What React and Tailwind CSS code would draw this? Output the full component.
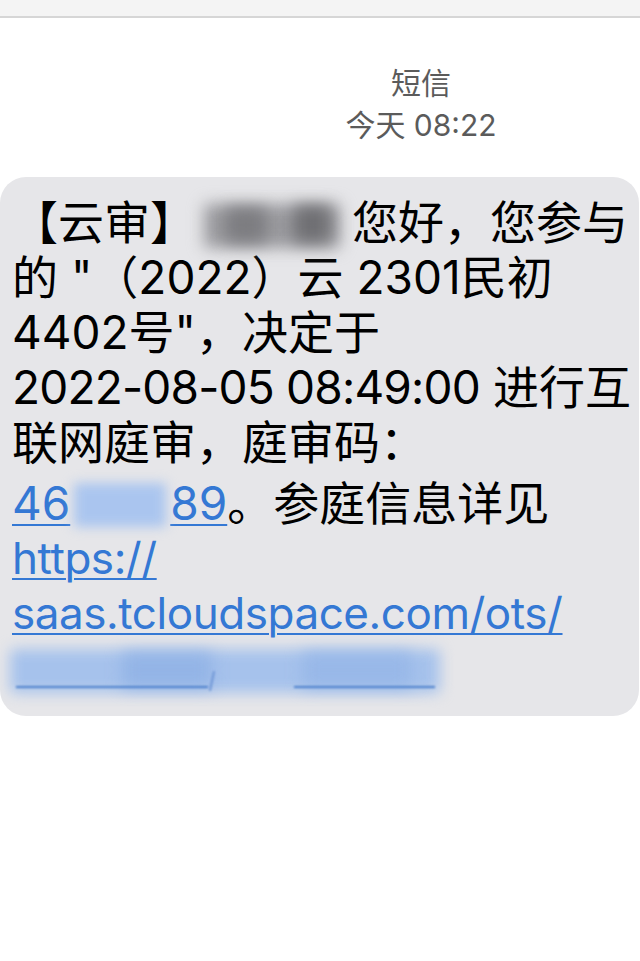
export default function App() {
  const font = { fontFamily: "Inter, 'Noto Sans CJK SC', sans-serif" };
  return (
    <div className="w-[640px] h-[961px] bg-white overflow-hidden" style={font}>
      {/* status strip */}
      <div className="h-[18px] bg-[#f4f4f4] border-b-2 border-[#d6d6d6]" />

      {/* header */}
      <div className="pl-[202px] pt-[44px] text-center text-[#5b5b5b] text-[30px] leading-[42px]">
        <div>短信</div>
        <div>今天 08:22</div>
      </div>

      {/* bubble */}
      <div className="mt-[31px] w-[639px] rounded-[26px] bg-[#e6e6e9] pl-[12px] pt-[18px] pb-[20px] text-black text-[46px] leading-[55px]">
        <div className="h-[55px] whitespace-nowrap flex items-center">
          <span>【云审】</span>
          <span className="inline-block w-[156px] h-[50px] relative">
            <span className="absolute left-[8px] top-[6px] w-[136px] h-[44px] bg-[#9a9a9e] blur-[8px] rounded" />
            <span className="absolute left-[30px] top-[10px] w-[40px] h-[34px] bg-[#7c7c80] blur-[8px] rounded" />
            <span className="absolute left-[98px] top-[8px] w-[36px] h-[36px] bg-[#6f6f73] blur-[8px] rounded" />
          </span>
          <span>您好，您参与</span>
        </div>
        <div className="h-[55px] whitespace-nowrap">的 "（2022）云 2301民初</div>
        <div className="h-[55px] whitespace-nowrap">4402号"，决定于</div>
        <div className="h-[55px] whitespace-nowrap">
          <span className="tracking-[-0.8px]">2022-08-05 08:49:00</span> 进行互
        </div>
        <div className="h-[55px] whitespace-nowrap">联网庭审，庭审码：</div>
        <div className="h-[61px] pt-[6px] whitespace-nowrap flex items-center">
          <span className="text-[#3478d4] underline decoration-2 underline-offset-4 flex items-center">
            <span>46</span>
            <span className="inline-block w-[100px] h-[50px] relative">
              <span className="absolute left-[4px] top-[4px] w-[92px] h-[44px] bg-[#aac5ef] blur-[6px]" />
            </span>
            <span>89</span>
          </span>
          <span>。参庭信息详见</span>
        </div>
        <div className="h-[55px] whitespace-nowrap text-[#3478d4] text-[44px] tracking-[-0.45px] underline decoration-2 underline-offset-4">https://</div>
        <div className="h-[55px] whitespace-nowrap text-[#3478d4] text-[44px] tracking-[-0.45px] underline decoration-2 underline-offset-4">saas.tcloudspace.com/ots/</div>
        <div className="h-[55px] relative">
          <div className="absolute left-[-2px] top-[8px] w-[430px] h-[44px] bg-[#a6c2ec] blur-[7px] rounded" />
          <div className="absolute left-[110px] top-[12px] w-[90px] h-[34px] bg-[#93b4e6] blur-[8px] rounded" />
          <div className="absolute left-[290px] top-[12px] w-[110px] h-[34px] bg-[#98b8e8] blur-[8px] rounded" />
          <div className="absolute left-[4px] top-[45px] w-[192px] h-[2px] bg-[#4a7fcc] blur-[1px]" />
          <div className="absolute left-[282px] top-[45px] w-[141px] h-[2px] bg-[#4a7fcc] blur-[1px]" />
          <div className="absolute left-[199px] top-[30px] w-[2px] h-[20px] bg-[#6d96d6] blur-[1px] rotate-12" />
        </div>
      </div>
    </div>
  );
}
